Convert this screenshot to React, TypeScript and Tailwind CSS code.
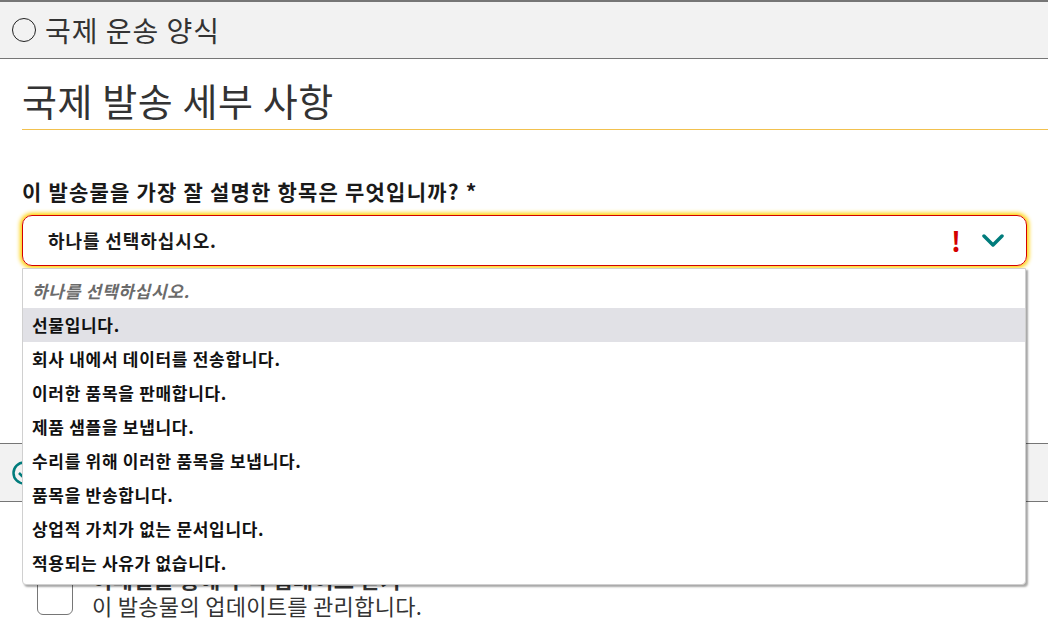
import React from "react";

const items = [
  "선물입니다.",
  "회사 내에서 데이터를 전송합니다.",
  "이러한 품목을 판매합니다.",
  "제품 샘플을 보냅니다.",
  "수리를 위해 이러한 품목을 보냅니다.",
  "품목을 반송합니다.",
  "상업적 가치가 없는 문서입니다.",
  "적용되는 사유가 없습니다.",
];

export default function App() {
  return (
    <div
      className="relative w-[1048px] h-[619px] overflow-hidden bg-white text-[#333]"
      style={{ fontFamily: '"Noto Sans CJK KR", "Noto Sans", sans-serif' }}
    >
      {/* Header */}
      <div className="h-[59px] border-t-2 border-b border-[#767676] bg-[#f2f2f2] flex items-center pl-[12px]">
        <span className="w-[24px] h-[24px] rounded-full border-[1.5px] border-[#222]" />
        <span className="ml-[9px] text-[28px] leading-none tracking-[1px] text-[#333]">국제 운송 양식</span>
      </div>

      <div className="pl-[22px]">
        <h1 className="mt-[16px] text-[38px] leading-[50px] tracking-[0.6px] pb-[4px] border-b border-[#f2c14e] font-normal text-[#333]">
          국제 발송 세부 사항
        </h1>

        <div className="mt-[49px] text-[21px] leading-[24px] tracking-[1.2px] font-bold text-[#1a1a1a]">
          이 발송물을 가장 잘 설명한 항목은 무엇입니까? *
        </div>

        <div className="mt-[12px] mr-[21px] h-[51px] rounded-[10px] border border-[#d40000] shadow-[0_0_4px_2px_#ffd000] flex items-center pl-[25px] pr-[22px]">
          <span className="flex-1 text-[18px] tracking-[0.9px] font-bold text-[#1a1a1a]">하나를 선택하십시오.</span>
          <span className="text-[27px] font-bold text-[#d40000] leading-none mr-[21px]">!</span>
          <svg width="22" height="14" viewBox="0 0 22 14">
            <path d="M2 2 L11 11 L20 2" fill="none" stroke="#007c7c" strokeWidth="3.5" strokeLinecap="round" strokeLinejoin="round" />
          </svg>
        </div>
      </div>

      {/* Second section bar */}
      <div className="mt-[177px] h-[59px] border-t border-b border-[#767676] bg-[#f2f2f2] flex items-center pl-[12px]">
        <svg width="24" height="24" viewBox="0 0 24 24">
          <circle cx="12" cy="12" r="10.5" fill="none" stroke="#007c7c" strokeWidth="2.5" />
          <path d="M7 12 L10.5 15.5 L17 9" fill="none" stroke="#007c7c" strokeWidth="2.5" />
        </svg>
      </div>

      {/* Checkbox row */}
      <div className="mt-[8px] flex pl-[37px]">
        <div className="mt-[69px] w-[36px] h-[36px] rounded-[6px] border border-[#767676] bg-white shrink-0" />
        <div className="ml-[19px] mt-[55px] flex flex-col">
          <span className="text-[22px] leading-[27px] tracking-[0.3px] font-bold text-[#333]">이메일을 통해 추적 업데이트 받기</span>
          <span className="text-[22px] leading-[27px] tracking-[0.3px] text-[#333]">이 발송물의 업데이트를 관리합니다.</span>
        </div>
      </div>

      {/* Dropdown list overlay */}
      <div className="absolute left-[22px] top-[268px] w-[1004px] h-[317px] bg-white border border-[#d0d0d0] rounded-b-[4px] shadow-[2px_2px_2px_rgba(0,0,0,0.35)] pt-[5px]">
        <div className="h-[34px] flex items-center pl-[9px] text-[17px] tracking-[0.7px] italic font-bold text-[#6b6b6b]">
          하나를 선택하십시오.
        </div>
        {items.map((t, i) => (
          <div
            key={t}
            className={
              i === 0
                ? "h-[34px] flex items-center pl-[9px] text-[17px] tracking-[0.7px] font-bold text-[#111] bg-[#e1e1e6]"
                : "h-[34px] flex items-center pl-[9px] text-[17px] tracking-[0.7px] font-bold text-[#111]"
            }
          >
            {t}
          </div>
        ))}
      </div>
    </div>
  );
}
